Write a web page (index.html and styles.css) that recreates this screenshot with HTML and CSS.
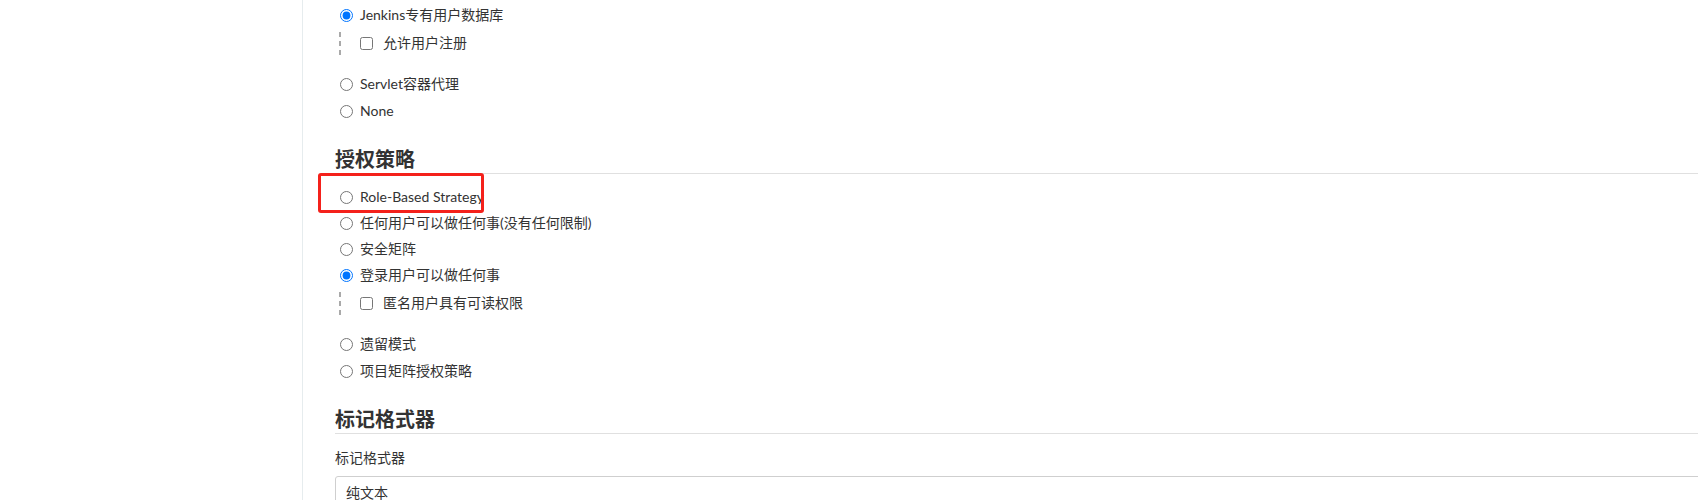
FILE: index.html
```html
<!DOCTYPE html>
<html lang="zh-CN">
<head>
<meta charset="utf-8">
<title>Jenkins 全局安全配置</title>
<link rel="stylesheet" href="styles.css">
</head>
<body>
<div class="page">
  <aside class="sidebar"></aside>
  <main class="main">
    <div class="form">
      <div class="group first">
        <label class="opt"><input type="radio" name="realm" checked><span>Jenkins专有用户数据库</span></label>
        <div class="nested">
          <label class="chk"><input type="checkbox"><span>允许用户注册</span></label>
        </div>
        <label class="opt after-nested"><input type="radio" name="realm"><span>Servlet容器代理</span></label>
        <label class="opt"><input type="radio" name="realm"><span>None</span></label>
      </div>

      <h2 class="section-title">授权策略</h2>
      <div class="group">
        <label class="opt"><input type="radio" name="authz"><span>Role-Based Strategy</span></label>
        <label class="opt"><input type="radio" name="authz"><span>任何用户可以做任何事(没有任何限制)</span></label>
        <label class="opt"><input type="radio" name="authz"><span>安全矩阵</span></label>
        <label class="opt"><input type="radio" name="authz" checked><span>登录用户可以做任何事</span></label>
        <div class="nested">
          <label class="chk"><input type="checkbox"><span>匿名用户具有可读权限</span></label>
        </div>
        <label class="opt after-nested"><input type="radio" name="authz"><span>遗留模式</span></label>
        <label class="opt"><input type="radio" name="authz"><span>项目矩阵授权策略</span></label>
      </div>

      <h2 class="section-title">标记格式器</h2>
      <div class="field">
        <div class="field-label">标记格式器</div>
        <div class="select">纯文本</div>
      </div>
    </div>
  </main>
  <div class="annotation"></div>
</div>
</body>
</html>
```

FILE: styles.css
```css
* { box-sizing: border-box; }

html, body {
  margin: 0;
  padding: 0;
  background: #fff;
  overflow: hidden;
}

body {
  font-family: Lato, "Noto Sans CJK SC", sans-serif;
  font-size: 14px;
  color: #333;
}

.page {
  position: relative;
  display: flex;
  height: 500px;
}

.sidebar {
  width: 303px;
  flex: none;
  border-right: 1px solid #e6ecee;
}

.main {
  flex: 1;
  padding-left: 32px;
  overflow: hidden;
}

.form {
  width: calc(100% + 12px);
}

.group {
  display: flex;
  flex-direction: column;
}

.group.first {
  padding-top: 2px;
}

.opt {
  display: flex;
  align-items: center;
  height: 26px;
  line-height: 20px;
}

.opt.after-nested {
  height: 28px;
}

.opt input {
  width: 13px;
  height: 13px;
  margin: 0 7px 0 5px;
}

.nested {
  margin: 4px 0 12px 4px;
  height: 26px;
  padding-left: 21px;
  background-image: repeating-linear-gradient(to bottom, #a9a9a9 0, #a9a9a9 5px, transparent 5px, transparent 9px);
  background-size: 2px 100%;
  background-repeat: no-repeat;
  background-position: 0 0;
}

.chk {
  display: flex;
  align-items: center;
  height: 22px;
  line-height: 20px;
}

.chk input {
  width: 13px;
  height: 13px;
  margin: 0 10px 0 0;
}

.section-title {
  margin: 23px 0 10px;
  font-family: "Noto Sans CJK SC", sans-serif;
  font-size: 20px;
  font-weight: 700;
  line-height: 24px;
  padding-bottom: 2px;
  border-bottom: 1px solid #e0e0e0;
  color: #333;
}

.field-label {
  margin-top: 14px;
  line-height: 20px;
}

.select {
  margin-top: 8px;
  height: 34px;
  border: 1px solid #cfcfcf;
  border-radius: 3px;
  padding: 0 10px;
  line-height: 32px;
}

.annotation {
  position: absolute;
  left: 318px;
  top: 173px;
  width: 166px;
  height: 40px;
  border: 3px solid #f4211b;
  border-radius: 3px;
}
```
